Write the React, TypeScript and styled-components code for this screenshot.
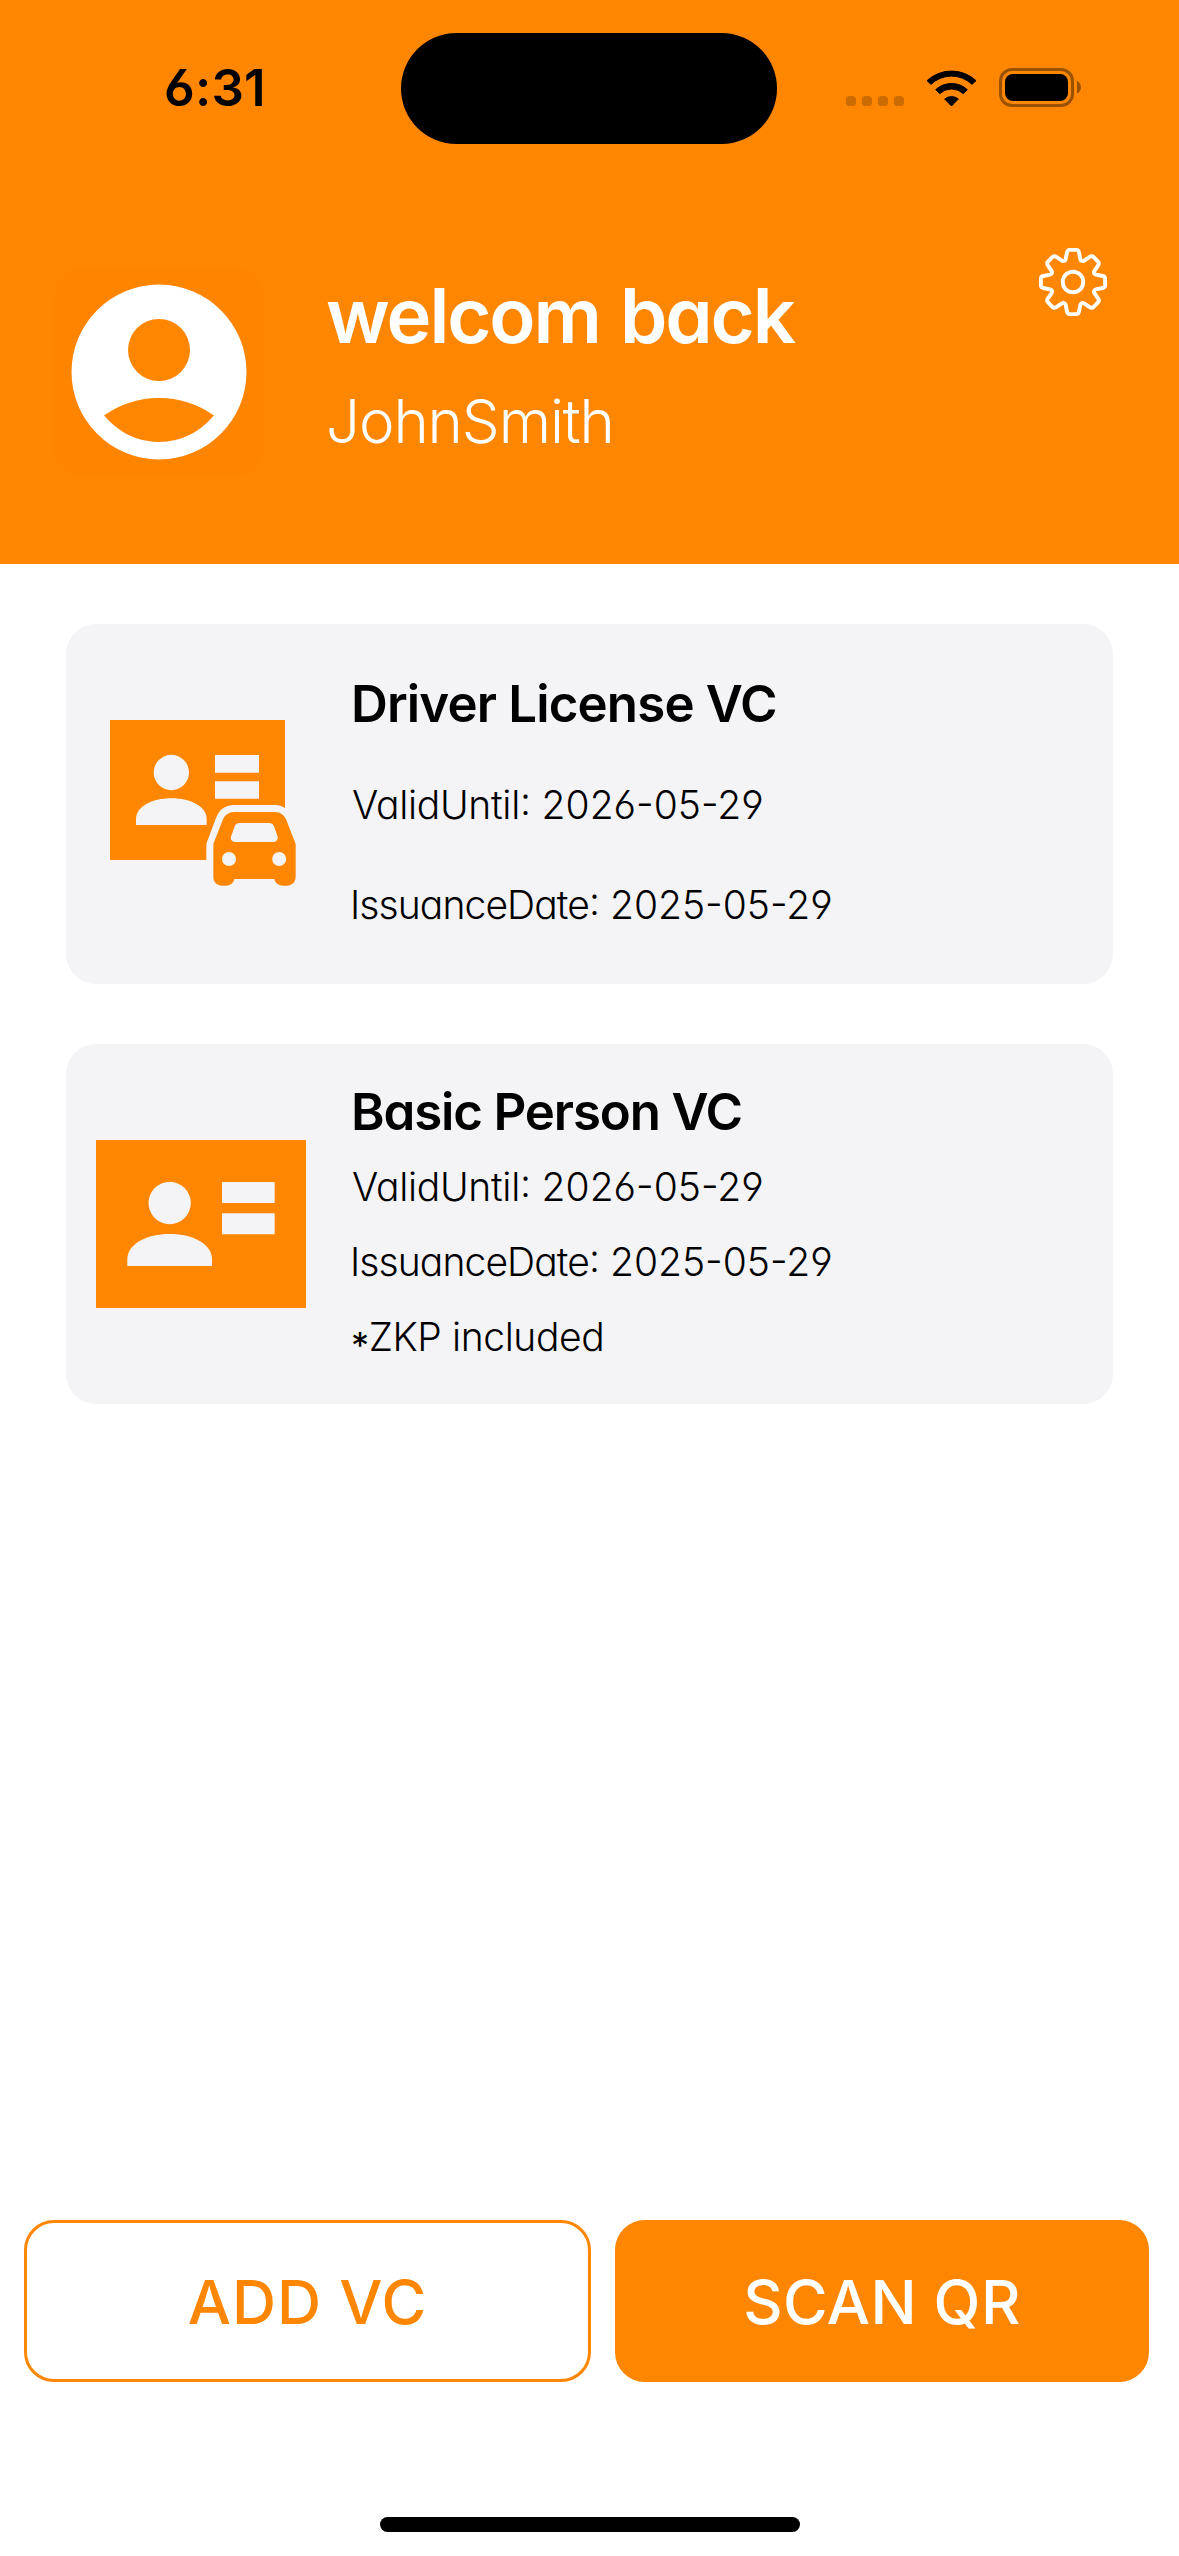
import React from "react";
import styled, { createGlobalStyle } from "styled-components";

const ORANGE = "#ff8600";
const CARD = "#f4f4f7";

const GlobalStyle = createGlobalStyle`
  * { box-sizing: border-box; }
  body { margin: 0; background: #fff; }
`;

const Screen = styled.div`
  width: 1179px;
  height: 2556px;
  display: flex;
  flex-direction: column;
  background: #fff;
  color: #000;
  font-family: Inter, "Noto Sans", sans-serif;
  font-feature-settings: "cv11", "cv03", "cv04";
  overflow: hidden;
`;

const Header = styled.header`
  height: 564px;
  background: ${ORANGE};
`;

const StatusBar = styled.div`
  height: 177px;
  display: flex;
  align-items: center;
  padding: 0 98px 0 164px;
`;

const Clock = styled.div`
  width: 237px;
  padding-bottom: 2px;
  font-size: 51px;
  font-weight: 600;
  line-height: 60px;
  letter-spacing: 0.2px;
  white-space: nowrap;
`;

const Island = styled.div`
  width: 376px;
  height: 111px;
  border-radius: 56px;
  background: #000;
`;

const StatusIcons = styled.div`
  margin: -2px 0 0 auto;
  display: flex;
  align-items: center;
  gap: 22px;
`;

const SignalDots = styled.div`
  display: flex;
  gap: 6px;
  margin-top: 27px;
`;

const Dot = styled.span`
  width: 10px;
  height: 10px;
  border-radius: 3.5px;
  background: #cc6b00;
`;

const Profile = styled.div`
  display: flex;
  padding: 90px 71px 0 54px;
`;

const AvatarTile = styled.div`
  width: 210px;
  height: 210px;
  border-radius: 30px;
  background: #ff8400;
`;

const Greeting = styled.div`
  margin-left: 62px;
  color: #fff;
`;

const Welcome = styled.h1`
  margin: 0;
  font-size: 76px;
  line-height: 97px;
  font-weight: 600;
  letter-spacing: -2.1px;
  word-spacing: 3px;
  white-space: nowrap;
`;

const UserName = styled.div`
  padding-top: 7px;
  font-size: 60px;
  line-height: 100px;
  font-weight: 300;
  letter-spacing: -1.1px;
  white-space: nowrap;
`;

const SettingsButton = styled.button`
  width: 70px;
  height: 70px;
  margin: -20px 0 0 auto;
  padding: 0;
  border: 0;
  background: none;
`;

const List = styled.main`
  flex: 1;
  display: flex;
  flex-direction: column;
  gap: 60px;
  padding: 60px 66px 0;
`;

const Card = styled.article`
  height: 360px;
  display: flex;
  align-items: center;
  padding: 0 30px;
  border-radius: 30px;
  background: ${CARD};
`;

const CardText = styled.div<{ $row: number }>`
  align-self: flex-start;
  margin-left: 44px;
  padding-top: 30px;
  line-height: ${(p) => p.$row}px;
  white-space: nowrap;
`;

const CardTitle = styled.h2<{ $track: number; $gap: number }>`
  margin: 0 0 ${(p) => p.$gap}px 1px;
  font-size: 51px;
  font-weight: 600;
  line-height: inherit;
  letter-spacing: ${(p) => p.$track}px;
`;

const Meta = styled.div<{ $indent?: number; $case?: boolean }>`
  padding-left: ${(p) => p.$indent ?? 0}px;
  font-size: 39px;
  font-weight: 300;
  font-feature-settings: "cv11", "cv03", "cv04"${(p) => (p.$case ? ', "case"' : "")};
`;

const Label = styled.span<{ $track: number }>`
  letter-spacing: ${(p) => p.$track}px;
`;

const Asterisk = styled.span`
  font-size: 36px;
  font-weight: 400;
  line-height: 1px;
  vertical-align: -7px;
`;

const Actions = styled.footer`
  display: flex;
  gap: 24px;
  padding: 0 30px 135px 24px;
`;

const ActionButton = styled.button<{ $filled?: boolean }>`
  width: ${(p) => (p.$filled ? 534 : 567)}px;
  height: 162px;
  border: 3px solid ${ORANGE};
  border-radius: 30px;
  padding: 1px 0 0;
  background: ${(p) => (p.$filled ? ORANGE : "#fff")};
  color: ${(p) => (p.$filled ? "#fff" : ORANGE)};
  font: inherit;
  font-size: 61px;
  font-weight: 500;
  letter-spacing: ${(p) => (p.$filled ? 0.4 : 1)}px;
  white-space: nowrap;
`;

const HomeIndicator = styled.div`
  width: 420px;
  height: 15px;
  margin: 0 auto 24px 380px;
  border-radius: 8px;
  background: #000;
`;

const Svg = styled.svg`
  display: block;
  flex: none;
  overflow: visible;
`;

function gearPath() {
  const rot = (x: number, y: number, deg: number) => {
    const a = (deg * Math.PI) / 180;
    return `${(x * Math.cos(a) - y * Math.sin(a)).toFixed(2)} ${(x * Math.sin(a) + y * Math.cos(a)).toFixed(2)}`;
  };
  let d = "";
  for (let k = 0; k < 8; k++) {
    const p = (x: number, y: number) => rot(x, y, k * 45);
    d += `${k ? "L" : "M"}${p(-8.6, -21.2)}Q${p(-7.6, -21.6)} ${p(-7.3, -23)}L${p(-6, -29.6)}Q${p(-5.5, -32.1)} ${p(-3.3, -32.1)}L${p(3.3, -32.1)}Q${p(5.5, -32.1)} ${p(6, -29.6)}L${p(7.3, -23)}Q${p(7.6, -21.6)} ${p(8.6, -21.2)}`;
  }
  return d + "Z";
}

const Gear = () => (
  <Svg width="70" height="70" viewBox="-35 -35 70 70" fill="none" stroke="#fff" strokeWidth="3.9" strokeLinejoin="round">
    <path d={gearPath()} />
    <circle r="10.3" />
  </Svg>
);

const Avatar = () => (
  <Svg width="210" height="210" viewBox="0 0 210 210">
    <circle cx="105" cy="105" r="87.5" fill="#fff" />
    <circle cx="105" cy="83" r="31" fill={ORANGE} />
    <path d="M50 148.500Q75 131 105 131T160 148.500Q137 175 105 175T50 148.500Z" fill={ORANGE} />
  </Svg>
);

const Wifi = () => (
  <Svg width="51" height="38" viewBox="378 85 153 114" stroke="#000" strokeWidth="3" strokeLinejoin="round">
    <path d="M381 120A108 108 0 0 1 528 120L516 131A89 89 0 0 0 393 131Z" />
    <path d="M407 147A70 70 0 0 1 502 147L490 159A52 52 0 0 0 419 159Z" />
    <path d="M434 175A33 33 0 0 1 475 175L454.500 196Z" />
  </Svg>
);

const Battery = () => (
  <Svg width="82" height="39" viewBox="0 0 82 39">
    <rect x="1.500" y="1.500" width="72" height="36" rx="11.500" fill="none" stroke="#9b5200" strokeWidth="3" />
    <rect x="6" y="6" width="63" height="27" rx="8" />
    <path d="M78 13C80.500 14 82 16.500 82 19.300S80.500 24.600 78 25.600Z" fill="#9b5200" />
  </Svg>
);

const LicenseIcon = () => (
  <Svg width="210" height="210" viewBox="138 267 630 630" fill={CARD}>
    <path d="M180 330H705V750H180Z" fill={ORANGE} />
    <circle cx="364" cy="487.500" r="53" />
    <path d="M258 645V627C258 590 305 565 364 565S470 590 470 627V645Z" />
    <path d="M495 435H627V488H495ZM495 514H627V566H495Z" />
    <path d="M469 752V701L498 624C507 600 525 585 552 585H676C688 585 698 589 707 596V752Z" />
    <path
      fill={ORANGE}
      d="M490 702L518 630C524 615 536 606 552 606H675C691 606 703 615 709 630L737 702V800C737 816 726 827 710 827H700C685 827 675 819 673 807H553C551 819 541 827 527 827H517C501 827 490 816 490 800Z"
    />
    <path d="M569 639H656C664 639 669 642 672 649L683 680C685 688 679 696 670 696H556C546 696 540 688 543 680L554 649C557 642 562 639 569 639Z" />
    <circle cx="537" cy="747" r="21" />
    <circle cx="687.500" cy="747" r="21" />
  </Svg>
);

const PersonIcon = () => (
  <Svg width="210" height="210" viewBox="138 267 630 630" fill={CARD}>
    <path d="M138 330H768V834H138Z" fill={ORANGE} />
    <circle cx="359" cy="519" r="63.500" />
    <path d="M232 708V687C232 643 288 612 359 612S486 643 486 687V708Z" />
    <path d="M516 456H674V519H516ZM516 550H674V613H516Z" />
  </Svg>
);

const Dates = () => (
  <>
    <Meta $indent={2} $case>
      <Label $track={-0.3}>ValidUntil:</Label> 2026-05-29
    </Meta>
    <Meta $case>
      <Label $track={-0.9}>IssuanceDate:</Label> 2025-05-29
    </Meta>
  </>
);

export default function App() {
  return (
    <>
      <GlobalStyle />
      <Screen>
        <Header>
          <StatusBar>
            <Clock>6:31</Clock>
            <Island />
            <StatusIcons>
              <SignalDots>
                <Dot />
                <Dot />
                <Dot />
                <Dot />
              </SignalDots>
              <Wifi />
              <Battery />
            </StatusIcons>
          </StatusBar>
          <Profile>
            <AvatarTile>
              <Avatar />
            </AvatarTile>
            <Greeting>
              <Welcome>welcom back</Welcome>
              <UserName>JohnSmith</UserName>
            </Greeting>
            <SettingsButton aria-label="Settings">
              <Gear />
            </SettingsButton>
          </Profile>
        </Header>
        <List>
          <Card>
            <LicenseIcon />
            <CardText $row={100}>
              <CardTitle $track={-0.85} $gap={1}>Driver License VC</CardTitle>
              <Dates />
            </CardText>
          </Card>
          <Card>
            <PersonIcon />
            <CardText $row={75}>
              <CardTitle $track={-1.15} $gap={0}>Basic Person VC</CardTitle>
              <Dates />
              <Meta $indent={1}>
                <Label $track={-0.4}>
                  <Asterisk>*</Asterisk>ZKP included
                </Label>
              </Meta>
            </CardText>
          </Card>
        </List>
        <Actions>
          <ActionButton>ADD VC</ActionButton>
          <ActionButton $filled>SCAN QR</ActionButton>
        </Actions>
        <HomeIndicator />
      </Screen>
    </>
  );
}
